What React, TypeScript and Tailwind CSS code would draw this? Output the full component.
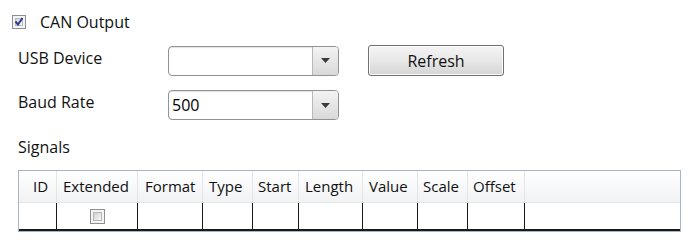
import React from "react";

const cols = [
  { name: "ID", w: "w-[38px]", pl: "pl-[14px]" },
  { name: "Extended", w: "w-[81px]", pl: "pl-[6px]" },
  { name: "Format", w: "w-[65px]", pl: "pl-[7px]" },
  { name: "Type", w: "w-[50px]", pl: "pl-[6px]" },
  { name: "Start", w: "w-[46px]", pl: "pl-[5px]" },
  { name: "Length", w: "w-[64px]", pl: "pl-[6px]" },
  { name: "Value", w: "w-[55px]", pl: "pl-[6px]" },
  { name: "Scale", w: "w-[50px]", pl: "pl-[5px]" },
  { name: "Offset", w: "w-[57px]", pl: "pl-[5px]" },
];

function ComboBox({ value }: { value?: string }) {
  return (
    <div className="flex h-[30px] w-[171px] rounded-[4px] border border-[#8f9296] bg-white shadow-[inset_0_1px_1px_rgba(0,0,0,0.12)]">
      <div className="flex flex-1 items-center pl-[3px] text-[16px] text-black">{value}</div>
      <div className="flex w-[26px] items-center justify-center rounded-r-[3px] border-l border-[#b6b8bb] bg-gradient-to-b from-[#f3f3f3] to-[#d9d9d9]">
        <svg width="9" height="5" viewBox="0 0 9 5">
          <path d="M0 0 H9 L4.5 5 Z" fill="#3a3a3a" />
        </svg>
      </div>
    </div>
  );
}

function Check({ checked }: { checked?: boolean }) {
  return (
    <div className="flex h-[14px] w-[14px] shrink-0 items-center justify-center border border-[#8e8f8f] bg-[#f4f4f4] p-[2px]">
      <div className="relative h-[8px] w-[8px] border border-[#b9b9b9] bg-gradient-to-br from-[#d8d8d8] to-[#ffffff]">
        {checked && (
          <svg width="10" height="9" viewBox="0 0 10 9" className="absolute -left-[2px] -top-[2px]">
            <path d="M1.5 4.5 L4 7.5 L8.5 1" stroke="#2c3a8c" strokeWidth="2" fill="none" />
          </svg>
        )}
      </div>
    </div>
  );
}

export default function App() {
  return (
    <div className="h-[247px] w-[700px] bg-white font-['Open_Sans','Noto_Sans',sans-serif] text-[16px] text-[#111]">
      <div className="flex items-center gap-[14px] pl-[12px] pt-[10px]">
        <Check checked />
        <span>CAN Output</span>
      </div>

      <div className="mt-[11px] flex items-center pl-[18px]">
        <span className="w-[150px] -translate-y-[3px]">USB Device</span>
        <ComboBox />
        <button className="ml-[29px] h-[31px] w-[136px] rounded-[3px] border border-[#707070] bg-gradient-to-b from-[#f4f4f4] via-[#e8e8e8] to-[#d4d4d4] text-[16px] text-[#111] shadow-[inset_0_0_0_1px_#fcfcfc]">
          Refresh
        </button>
      </div>

      <div className="mt-[14px] flex items-center pl-[18px]">
        <span className="w-[150px] -translate-y-[3px]">Baud Rate</span>
        <ComboBox value="500" />
      </div>

      <div className="mt-[15px] pl-[18px]">Signals</div>

      <div className="ml-[18px] mt-[11px] w-[663px] border border-[#a5b6c8] text-[15px]">
        <div className="flex h-[31px] bg-gradient-to-b from-[#ffffff] to-[#f1f2f4]">
          {cols.map((c) => (
            <div
              key={c.name}
              className={`${c.w} ${c.pl} flex items-center border-r border-[#e2e4e7] whitespace-nowrap`}
            >
              {c.name}
            </div>
          ))}
          <div className="flex-1" />
        </div>
        <div className="flex h-[29px] border-t border-[#e3e5e8] bg-white">
          <div className="flex flex-1 border-b-2 border-[#1a1a1a]">
            {cols.map((c, i) => (
              <div
                key={c.name}
                className={`${c.w} flex items-center justify-center border-r border-[#1a1a1a]`}
              >
                {i === 1 && (
                  <div className="flex h-[15px] w-[15px] items-center justify-center border border-[#8e8f8f] bg-[#f4f4f4]">
                    <div className="h-[9px] w-[9px] border border-[#b5b5b5] bg-gradient-to-br from-[#d0d0d0] to-[#fafafa]" />
                  </div>
                )}
              </div>
            ))}
            <div className="flex-1" />
          </div>
        </div>
      </div>
    </div>
  );
}
